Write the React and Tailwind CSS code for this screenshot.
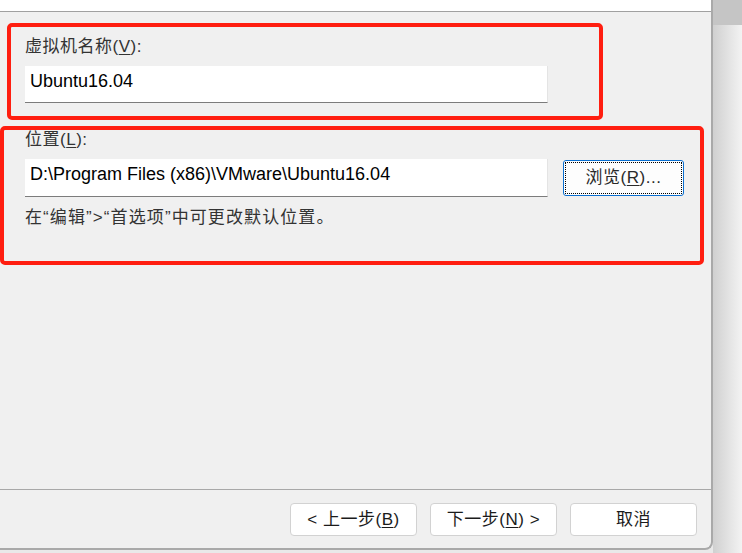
import React from "react";

const font = { fontFamily: '"Liberation Sans", "Noto Sans CJK SC", sans-serif' };

const Key = ({ children }) => <span className="underline underline-offset-2">{children}</span>;

const FooterButton = ({ children }) => (
  <button className="w-[127px] h-[33px] bg-white border border-[#d2d2d2] rounded-[4px] text-[17px] tracking-[0.5px] text-[#1b1b1b] flex items-center justify-center">
    {children}
  </button>
);

const App = () => {
  return (
    <div className="w-[742px] h-[553px] flex bg-[#e9e9e9] overflow-hidden" style={font}>
      {/* Dialog */}
      <div className="w-[713px] h-[550px] shrink-0 flex flex-col bg-[#f0f0f0] border-r-2 border-b-2 border-[#a9a9a9] rounded-br-[8px]">
        <div className="h-[12px] bg-white border-b border-[#a0a0a0] shrink-0" />

        {/* Name box */}
        <div className="ml-[7px] mt-[11px] w-[596px] h-[97px] border-4 border-[#ff1e10] rounded-[5px] pl-[14px] pt-[10px]">
          <div className="text-[17px] leading-[20px] tracking-[0.5px] text-[#333]">
            虚拟机名称(<Key>V</Key>):
          </div>
          <div className="mt-[9px] w-[523px] h-[37px] bg-white border-b border-[#7c7c7c] border-r border-r-[#e4e4e4] pl-[5px] flex items-center pb-[5px] text-[18px] text-black">
            Ubuntu16.04
          </div>
        </div>

        {/* Location box */}
        <div className="mt-[6px] w-[704px] h-[139px] border-4 border-[#ff1e10] rounded-[5px] pl-[21px]">
          <div className="text-[17px] leading-[20px] tracking-[0.5px] text-[#333]">
            位置(<Key>L</Key>):
          </div>
          <div className="mt-[9px] flex items-start">
            <div className="w-[523px] h-[38px] bg-white border-b border-[#7c7c7c] border-r border-r-[#e4e4e4] pl-[5px] flex items-center pb-[7px] text-[18px] text-black whitespace-nowrap">
              D:\Program Files (x86)\VMware\Ubuntu16.04
            </div>
            <button className="ml-[15px] mt-[1px] w-[121px] h-[36px] bg-[#fdfdfd] border border-[#0a6fd0] rounded-[3px] p-[1px]">
              <div className="w-full h-full border border-dotted border-black flex items-center justify-center text-[17px] tracking-[0.5px] text-[#2a2a2a]">
                浏览(<Key>R</Key>)...
              </div>
            </button>
          </div>
          <div className="mt-[11px] text-[17px] leading-[20px] tracking-[1.1px] text-[#333]">
            在“编辑”&gt;“首选项”中可更改默认位置。
          </div>
        </div>

        <div className="flex-1" />

        {/* Footer */}
        <div className="border-t border-[#a8a8a8] h-[59px] flex justify-end gap-[13px] pr-[14px] pt-[13px]">
          <FooterButton>&lt; 上一步(<Key>B</Key>)</FooterButton>
          <FooterButton>下一步(<Key>N</Key>) &gt;</FooterButton>
          <FooterButton>取消</FooterButton>
        </div>
      </div>

      {/* Background window area */}
      <div className="flex-1 flex flex-col">
        <div className="h-[25px] bg-[#c5c5c5]" />
        <div className="flex-1 bg-gradient-to-r from-[#d0d0d0] to-[#f3f3f3]" />
      </div>
    </div>
  );
};

export default App;
